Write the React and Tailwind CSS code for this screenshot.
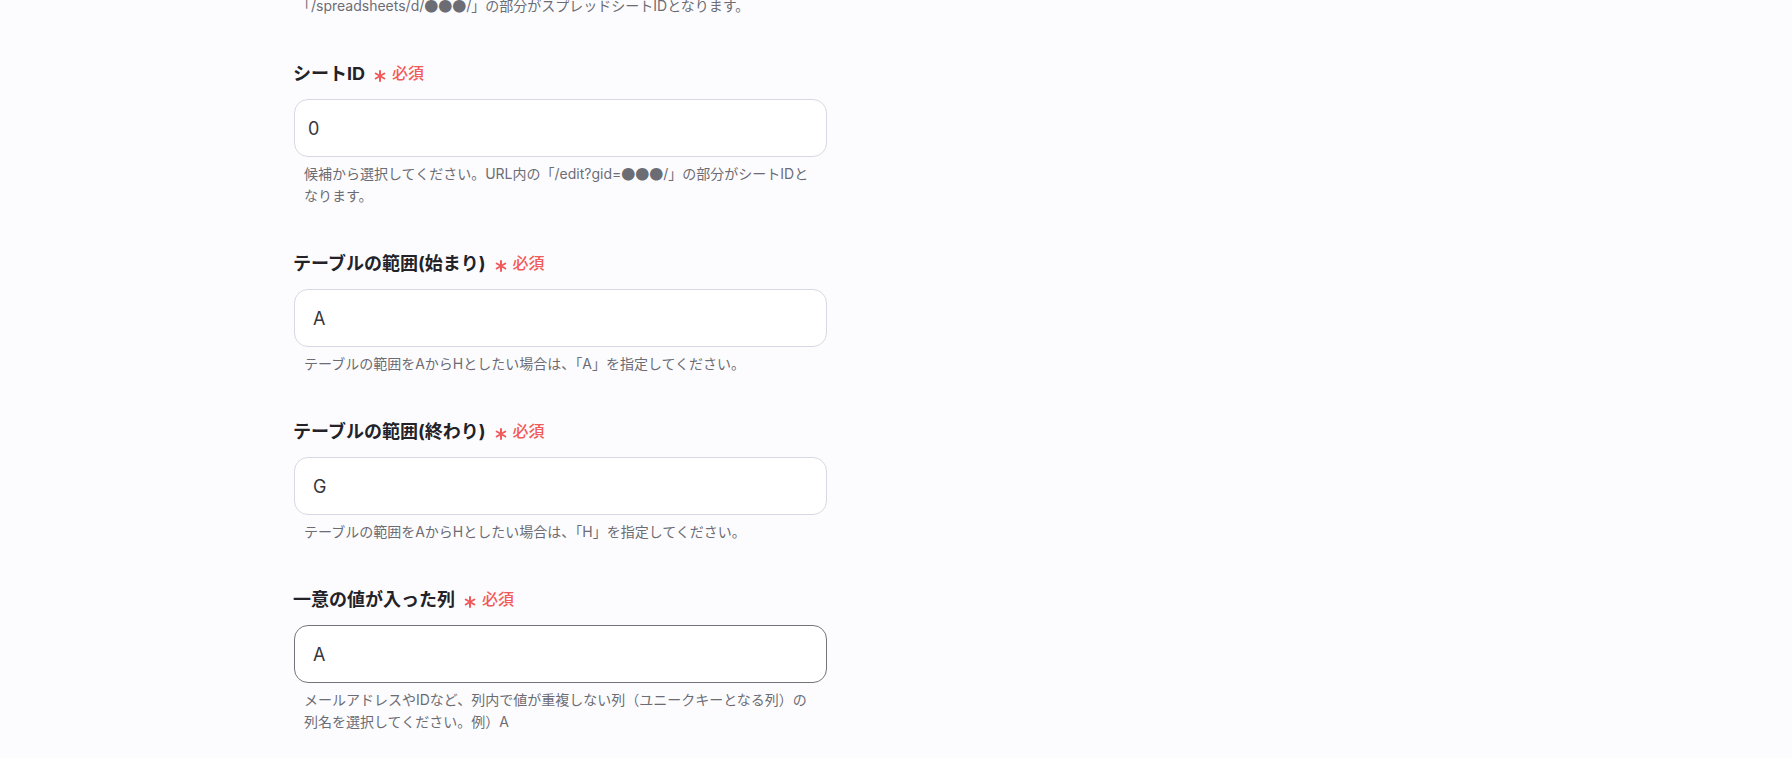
import React from 'react';

// 黒丸はCJKフォントの全角グリフで表示する
const Dots = () => <span className="leading-none [font-family:'Noto_Sans_CJK_JP',sans-serif]">●●●</span>;

const fields = [
  {
    label: 'シートID',
    value: '0',
    pad: 'pl-[13px]',
    help: [
      <>候補から選択してください。URL内の「/edit?gid=<Dots />/」の部分がシートIDと</>,
      'なります。',
    ],
  },
  {
    label: 'テーブルの範囲(始まり)',
    value: 'A',
    pad: 'pl-[18px]',
    help: ['テーブルの範囲をAからHとしたい場合は、「A」を指定してください。'],
  },
  {
    label: 'テーブルの範囲(終わり)',
    value: 'G',
    pad: 'pl-[18px]',
    help: ['テーブルの範囲をAからHとしたい場合は、「H」を指定してください。'],
  },
  {
    label: '一意の値が入った列',
    value: 'A',
    pad: 'pl-[18px]',
    focused: true,
    help: ['メールアドレスやIDなど、列内で値が重複しない列（ユニークキーとなる列）の', '列名を選択してください。例）A'],
  },
];

const Asterisk = () => (
  <svg width="12" height="12" viewBox="0 0 12 12" className="mt-[6px]">
    <g stroke="#f25a5a" strokeWidth="2" strokeLinecap="round">
      <line x1="6" y1="1" x2="6" y2="11" />
      <line x1="1.7" y1="3.5" x2="10.3" y2="8.5" />
      <line x1="1.7" y1="8.5" x2="10.3" y2="3.5" />
    </g>
  </svg>
);

const Field = ({ field }) => (
  <div className="mt-[42px]">
    <div className="flex h-[28px] items-center gap-[9px]">
      <span className="-ml-px text-[18px] font-bold text-[#222228]">{field.label}</span>
      <span className="flex items-center gap-[6px]">
        <Asterisk />
        <span className="text-[16px] font-medium text-[#f25a5a]">必須</span>
      </span>
    </div>
    <div
      className={`mt-[12px] flex h-[58px] w-[533px] items-center rounded-[14px] border bg-white ${field.pad} text-[18px] text-[#36363c] ${
        field.focused ? 'border-[#74747c]' : 'border-[#d6d9e4]'
      }`}
    >
      {field.value}
    </div>
    <div className="mt-[6px] pl-[10px] text-[14px] leading-[22px] text-[#6c6c74]">
      {field.help.map((line, i) => (
        <p key={i} className="h-[22px] whitespace-nowrap">{line}</p>
      ))}
    </div>
  </div>
);

export default function App() {
  return (
    <div
      className="min-h-[758px] w-full overflow-hidden bg-[#fcfcfe] pl-[294px]"
      style={{ fontFamily: 'Inter, "Noto Sans CJK JP", sans-serif' }}
    >
      <div className="w-[533px]">
        <p className="-mt-[5px] h-[22px] whitespace-nowrap pl-[10px] text-[14px] leading-[22px] text-[#6c6c74]">
          <span className="-ml-[7px]">「</span>/spreadsheets/d/<Dots />/」の部分がスプレッドシートIDとなります。
        </p>
        {fields.map((f, i) => (
          <Field key={i} field={f} />
        ))}
      </div>
    </div>
  );
}
